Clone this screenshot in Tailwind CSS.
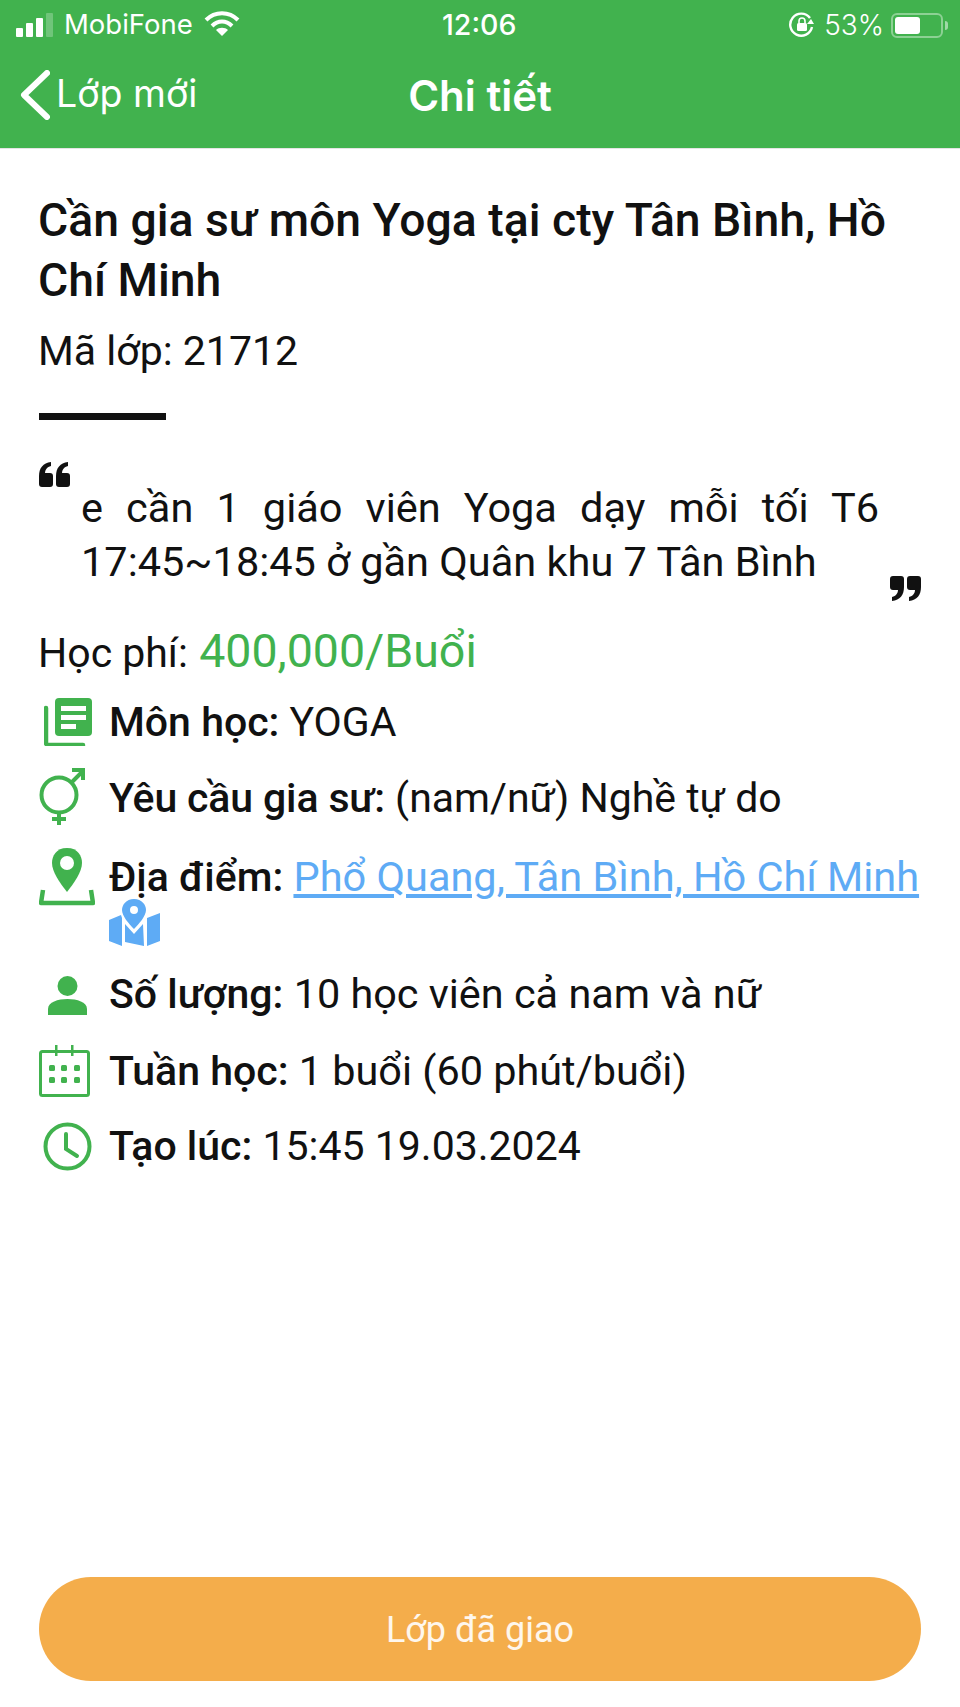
<!DOCTYPE html>
<html lang="vi">
<head>
  <meta charset="UTF-8" />
  <meta name="viewport" content="width=device-width, initial-scale=1.0" />
  <title>Chi tiết</title>
  <script src="https://cdn.jsdelivr.net/npm/@tailwindcss/browser@4"></script>
</head>
<body class="w-[960px] h-[1707px] bg-white overflow-hidden flex flex-col font-['Roboto',sans-serif] text-[#111]">
  <!-- Status bar + nav -->
  <header class="h-[149px] shrink-0 bg-[#41b24e] text-white font-['Inter',sans-serif] border-b border-[#e4e4e4]">
    <div class="relative h-[50px] flex items-center justify-between pl-[16px] pr-[12px]">
      <div class="flex items-center">
        <div class="flex items-end gap-[3px] h-[26px] pb-[1px]">
          <span class="w-[7px] h-[9px] bg-white rounded-[1px]"></span>
          <span class="w-[7px] h-[14px] bg-white rounded-[1px]"></span>
          <span class="w-[7px] h-[19px] bg-white rounded-[1px]"></span>
          <span class="w-[7px] h-[24px] bg-white/25 rounded-[1px]"></span>
        </div>
        <span class="ml-[11px] text-[27.5px] leading-none">MobiFone</span>
        <svg class="ml-[11px] -mt-[3px]" width="36" height="27" viewBox="0 0 36 27" fill="none" stroke="#fff" stroke-width="4">
          <path d="M2 10c9-9 23-9 32 0" />
          <path d="M8 16c6-6 14-6 20 0" />
          <path d="M18 26l-6-6c3-3 9-3 12 0z" fill="#fff" stroke="none" />
        </svg>
      </div>
      <span class="absolute left-[442px] top-[10px] text-[28.5px] leading-[30px] font-medium">12:06</span>
      <div class="flex items-center">
        <svg width="26" height="26" viewBox="0 0 26 26" fill="none">
          <path d="M21 6a11 11 0 1 0 2 9" stroke="#fff" stroke-width="2.4" />
          <path d="M25 12h-7l4-5z" fill="#fff" />
          <rect x="8" y="11" width="10" height="8" rx="1.5" fill="#fff" />
          <path d="M10 11V9a3 3 0 0 1 6 0v2" stroke="#fff" stroke-width="1.6" />
        </svg>
        <span class="ml-[9px] text-[28px] leading-none font-light">53%</span>
        <div class="ml-[7px] w-[52px] h-[25px] border-2 border-white/40 rounded-[6px] p-[2px]">
          <div class="w-[25px] h-full bg-white rounded-[3px]"></div>
        </div>
        <span class="ml-[2px] w-[3px] h-[9px] bg-white/50 rounded-r-sm"></span>
      </div>
    </div>
    <div class="relative h-[98px] flex items-center justify-center">
      <div class="absolute left-[20px] top-[20px] flex items-center">
        <svg width="30" height="50" viewBox="0 0 30 50" fill="none" stroke="#fff" stroke-width="6" stroke-linecap="round" stroke-linejoin="round">
          <path d="M27 3L4 25l23 22" />
        </svg>
        <span class="ml-[6px] text-[37.5px] leading-[50px] -mt-[2px]">Lớp mới</span>
      </div>
      <span class="text-[42px] leading-none font-semibold -mt-[7px]">Chi tiết</span>
    </div>
  </header>

  <main class="flex-1 flex flex-col px-[39px]">
    <h1 class="mt-[41px] -ml-[1px] text-[46.3px] leading-[60px] font-medium text-[#111]">Cần gia sư môn Yoga tại cty Tân Bình, Hồ Chí Minh</h1>
    <p class="mt-[16px] -ml-[1px] text-[41px] leading-[50px]">Mã lớp: 21712</p>
    <div class="mt-[37px] w-[127px] h-[7px] bg-[#111]"></div>

    <!-- Quote -->
    <div class="mt-[42px] relative h-[133px]">
      <svg class="absolute left-0 top-0" width="31" height="25" viewBox="0 0 31 25" fill="#111">
        <path d="M0 14C0 6 4 1 12 0v4C8 5 6 8 6 11h5c2 0 3 1 3 3v8c0 2-1 3-3 3H3c-2 0-3-1-3-3z" />
        <path d="M17 14c0-8 4-13 12-14v4c-4 1-6 4-6 7h5c2 0 3 1 3 3v8c0 2-1 3-3 3h-8c-2 0-3-1-3-3z" />
      </svg>
      <p class="absolute left-[42px] top-[19px] w-[798px] text-[41.5px] leading-[54px] text-justify">e cần 1 giáo viên Yoga dạy mỗi tối T6 17:45~18:45 ở gần Quân khu 7 Tân Bình</p>
      <svg class="absolute right-0 bottom-[-6px]" width="31" height="25" viewBox="0 0 31 25" fill="#111">
        <path d="M14 11c0 8-4 13-12 14v-4c4-1 6-4 6-7H3c-2 0-3-1-3-3V3c0-2 1-3 3-3h8c2 0 3 1 3 3z" />
        <path d="M31 11c0 8-4 13-12 14v-4c4-1 6-4 6-7h-5c-2 0-3-1-3-3V3c0-2 1-3 3-3h8c2 0 3 1 3 3z" />
      </svg>
    </div>

    <p class="mt-[29px] -ml-[1px] h-[54px] text-[41px] leading-[54px]">Học phí: <span class="ml-[1px] text-[46.5px] text-[#41b24e]">400,000/Buổi</span></p>

    <!-- Info rows -->
    <ul class="mt-[7px] flex flex-col">
      <li class="flex h-[74px] items-center">
        <span class="w-[70px] shrink-0 pl-[5px]">
          <svg class="block" width="48" height="48" viewBox="0 0 48 48">
            <path d="M2 10v35c0 1 1 2 2 2h35" fill="none" stroke="#41b24e" stroke-width="4.5" stroke-linecap="round" />
            <rect x="11" y="0" width="37" height="38" rx="4" fill="#41b24e" />
            <path d="M17 8h25v5H17zM17 17h25v5H17zM17 26h15v5H17z" fill="#fff" />
          </svg>
        </span>
        <span class="text-[41px] leading-none"><b class="font-medium">Môn học:</b> YOGA</span>
      </li>
      <li class="flex h-[78px] items-center">
        <span class="w-[70px] shrink-0 -mt-[2px]">
          <svg class="block" width="46" height="58" viewBox="0 0 46 58" fill="none" stroke="#41b24e" stroke-width="4">
            <circle cx="20" cy="27" r="17.5" />
            <path d="M20 44v13M13 51h14M32 15L44 3M33 2h11v10" />
          </svg>
        </span>
        <span class="text-[41px] leading-none"><b class="font-medium tracking-[-0.15px]">Yêu cầu gia sư:</b> (nam/nữ) Nghề tự do</span>
      </li>
      <li class="flex h-[120px] pt-[15px]">
        <span class="w-[70px] shrink-0 -mt-[4px]">
          <svg class="block" width="56" height="60" viewBox="0 0 56 60">
            <path d="M28 0c-11 0-15 8-15 15 0 9 8 20 15 29 7-9 15-20 15-29C43 8 39 0 28 0z" fill="#41b24e" />
            <circle cx="28" cy="15" r="7" fill="#fff" />
            <path d="M4 42L2 55h52l-2-13" fill="none" stroke="#41b24e" stroke-width="4.5" stroke-linejoin="round" />
          </svg>
        </span>
        <div>
          <p class="h-[50px] text-[41px] leading-[50px] whitespace-nowrap"><b class="font-medium">Địa điểm:</b> <a class="text-[41.5px] text-[#5eabf5] underline">Phổ Quang, Tân Bình, Hồ Chí Minh</a></p>
          <svg class="block -mt-[3px]" width="51" height="47" viewBox="0 0 51 47" fill="#5eabf5">
            <path d="M25 0c-8 0-12 6-12 11 0 6 7 14 12 19 5-5 12-13 12-19 0-5-4-11-12-11zm0 7a4 4 0 1 1 0 8 4 4 0 0 1 0-8z" fill-rule="evenodd" />
            <path d="M0 21l12-5 1 3 0 28L0 42zM16 25l9 10 9-10 1 22-19-4zM38 19l13-5v28l-13 5z" />
          </svg>
        </div>
      </li>
      <li class="flex h-[76px] items-center">
        <span class="w-[70px] shrink-0 pl-[9px]">
          <svg class="block" width="39" height="39" viewBox="0 0 39 39" fill="#41b24e">
            <circle cx="19.5" cy="10" r="10" />
            <path d="M0 39v-6c0-7 10-10 19.500-10S39 26 39 33v6z" />
          </svg>
        </span>
        <span class="text-[41.4px] leading-none"><b class="font-medium text-[41px]">Số lượng:</b> 10 học viên cả nam và nữ</span>
      </li>
      <li class="flex h-[78px] items-center">
        <span class="w-[70px] shrink-0 -mt-[3px]">
          <svg class="block" width="51" height="52" viewBox="0 0 51 52" fill="#41b24e">
            <rect x="1.500" y="6.500" width="48" height="44" rx="2" fill="none" stroke="#41b24e" stroke-width="3" />
            <path d="M16 0h2.500v11H16zM32 0h2.500v11H32z" />
            <rect x="10" y="20" width="6" height="6" rx="1.500" /><rect x="22" y="20" width="6" height="6" rx="1.500" /><rect x="35" y="20" width="6" height="6" rx="1.500" />
            <rect x="10" y="32" width="6" height="6" rx="1.500" /><rect x="22" y="32" width="6" height="6" rx="1.500" /><rect x="35" y="32" width="6" height="6" rx="1.500" />
          </svg>
        </span>
        <span class="text-[41.4px] leading-none"><b class="font-medium text-[41px]">Tuần học:</b> 1 buổi (60 phút/buổi)</span>
      </li>
      <li class="flex h-[70px] items-center">
        <span class="w-[70px] shrink-0 pl-[4px]">
          <svg class="block" width="49" height="49" viewBox="0 0 49 49" fill="none" stroke="#41b24e" stroke-width="4">
            <circle cx="24.500" cy="24.500" r="22" />
            <path d="M23 12v15l11 7" stroke-linecap="round" />
          </svg>
        </span>
        <span class="text-[41px] leading-none"><b class="font-medium">Tạo lúc:</b> 15:45 19.03.2024</span>
      </li>
    </ul>

    <button class="mt-auto mb-[26px] h-[104px] rounded-full bg-[#f4ad4b] text-white/90 text-[36px] pt-[2px]">Lớp đã giao</button>
  </main>
</body>
</html>
